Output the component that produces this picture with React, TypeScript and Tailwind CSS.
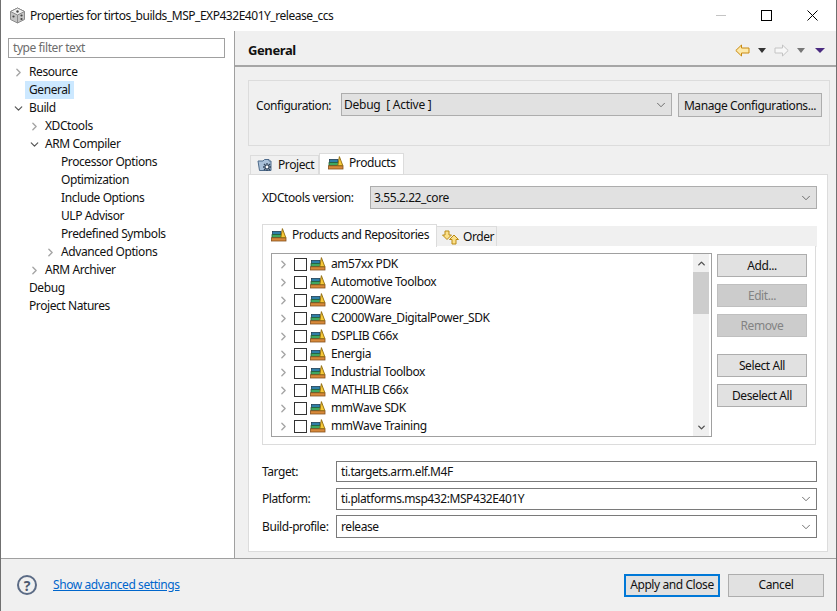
import { ChevronDown, ChevronRight, ChevronUp } from "lucide-react";

const font = "font-['Noto_Sans',sans-serif] text-[12px] tracking-[-0.42px] text-[#111]";

function Twisty({ open }: { open?: boolean }) {
  return open ? (
    <ChevronDown className="h-[13px] w-[13px] text-[#555]" strokeWidth={2.2} />
  ) : (
    <ChevronRight className="h-[13px] w-[13px] text-[#a6a6a6]" strokeWidth={2.6} />
  );
}

function TreeRow({
  label,
  indent = 0,
  twisty,
}: {
  label: string;
  indent?: number;
  twisty?: "open" | "closed";
}) {
  return (
    <div className="flex h-[18px] items-center" style={{ paddingLeft: indent * 16 + 11 }}>
      <span className="flex w-[13px] shrink-0 items-center justify-center">
        {twisty ? <Twisty open={twisty === "open"} /> : null}
      </span>
      <span className="pl-[4px] leading-[18px]">{label}</span>
    </div>
  );
}

function BooksIcon() {
  return (
    <svg width="16" height="14" viewBox="0 0 16 14" className="shrink-0">
      <rect x="1.5" y="3.5" width="8.5" height="3" fill="#2f7fa8" stroke="#1f3f55" strokeWidth="0.8" />
      <rect x="1" y="6.6" width="9.5" height="3" fill="#3fa860" stroke="#24603a" strokeWidth="0.8" />
      <rect x="0.5" y="9.8" width="14.5" height="3.2" fill="#d8893a" stroke="#84501c" strokeWidth="0.8" />
      <path d="M11.4 0.6 L9.8 9.6 H14.8 Z" fill="#f6c938" stroke="#8f6a10" strokeWidth="0.9" />
    </svg>
  );
}

function ProjectIcon() {
  return (
    <svg width="16" height="14" viewBox="0 0 16 14" className="shrink-0">
      <path d="M1 3 H6 L7.5 1.5 H12 V3 H14 V12.5 H2.5 Z" fill="#a9c0d8" stroke="#4d6a8a" strokeWidth="1" />
      <path d="M7 6 L13 12 M13 6 L7 12 M10 5 V13 M6 9 H14" stroke="#34465c" strokeWidth="1.3" />
      <circle cx="10" cy="9" r="1.4" fill="#fff" />
    </svg>
  );
}

function OrderIcon() {
  return (
    <svg width="17" height="15" viewBox="0 0 17 15" className="shrink-0">
      <path d="M3 1 H7 V5 H9.5 L5 9.5 L0.5 5 H3 Z" fill="#fbe08a" stroke="#b98a14" strokeWidth="1" />
      <path d="M10 14 H14 V9.5 H16.5 L12 5 L7.5 9.5 H10 Z" fill="#fbe08a" stroke="#b98a14" strokeWidth="1" />
    </svg>
  );
}

function WindowIcon() {
  return (
    <svg width="17" height="17" viewBox="0 0 17 17" className="shrink-0">
      <path d="M8.5 1 L15.5 4.5 V12.5 L8.5 16 L1.5 12.5 V4.5 Z" fill="#c4c4c4" stroke="#8c8c8c" />
      <path d="M8.5 1 L15.5 4.5 L8.5 8 L1.5 4.5 Z" fill="#efefef" stroke="#8c8c8c" />
      <path d="M8.5 8 V16" stroke="#8c8c8c" />
      <circle cx="8.5" cy="4.5" r="1.2" fill="#444" />
      <circle cx="4.5" cy="9.5" r="1.1" fill="#444" />
      <circle cx="12.5" cy="8.5" r="1.1" fill="#444" />
      <circle cx="12.5" cy="12" r="1.1" fill="#444" />
    </svg>
  );
}

function NavArrow({ left, disabled }: { left?: boolean; disabled?: boolean }) {
  return (
    <svg width="15" height="13" viewBox="0 0 15 13">
      <path
        d={left ? "M0.8 6.5 L6.5 1 V4 H14 V9 H6.5 V12 Z" : "M14.2 6.5 L8.5 1 V4 H1 V9 H8.5 V12 Z"}
        fill={disabled ? "#f7f7f7" : "#fde9a9"}
        stroke={disabled ? "#c4c4c4" : "#c98a10"}
      />
    </svg>
  );
}

function Caret({ color, wide }: { color: string; wide?: boolean }) {
  return (
    <svg width={wide ? 10 : 8} height="5" viewBox={wide ? "0 0 10 5" : "0 0 8 5"}>
      <path d={wide ? "M0 0 H10 L5 5 Z" : "M0 0 H8 L4 5 Z"} fill={color} />
    </svg>
  );
}

function Btn({
  label,
  disabled,
  className = "",
}: {
  label: string;
  disabled?: boolean;
  className?: string;
}) {
  return (
    <div
      className={
        (disabled
          ? "border-[#bfbfbf] bg-[#cccccc] text-[#838383] "
          : "border-[#adadad] bg-[#e1e1e1] ") +
        "flex items-center justify-center whitespace-nowrap border " +
        className
      }
    >
      {label}
    </div>
  );
}

function Combo({ value, className = "" }: { value: string; className?: string }) {
  return (
    <div className={"flex items-center justify-between border pr-[3px] " + className}>
      <span className="whitespace-pre">{value}</span>
      <ChevronDown className="h-[14px] w-[14px] text-[#555]" strokeWidth={1.4} />
    </div>
  );
}

const products = [
  "am57xx PDK",
  "Automotive Toolbox",
  "C2000Ware",
  "C2000Ware_DigitalPower_SDK",
  "DSPLIB C66x",
  "Energia",
  "Industrial Toolbox",
  "MATHLIB C66x",
  "mmWave SDK",
  "mmWave Training",
];

function ProductRow({ label }: { label: string }) {
  return (
    <div className="flex h-[18px] shrink-0 items-center pl-[5px]">
      <ChevronRight className="h-[13px] w-[13px] text-[#a6a6a6]" strokeWidth={2.6} />
      <span className="ml-[4px] h-[13px] w-[13px] shrink-0 border border-[#333] bg-white" />
      <span className="ml-[3px] flex">
        <BooksIcon />
      </span>
      <span className="ml-[5px] whitespace-nowrap">{label}</span>
    </div>
  );
}

export default function App() {
  return (
    <div className={font + " flex h-[611px] w-[837px] flex-col overflow-hidden border-x border-[#707070] bg-white"}>
      {/* title bar */}
      <div className="flex h-[31px] shrink-0 items-center bg-white pl-[8px]">
        <WindowIcon />
        <span className="ml-[4px] flex-1 tracking-[-0.47px]">Properties for tirtos_builds_MSP_EXP432E401Y_release_ccs</span>
        <div className="mr-[35px] h-px w-[10px] bg-[#c4c4c4]" />
        <div className="mr-[35px] h-[11px] w-[11px] border border-black" />
        <svg width="11" height="11" viewBox="0 0 11 11" className="mr-[18px]">
          <path d="M0.5 0.5 L10.5 10.5 M10.5 0.5 L0.5 10.5" stroke="#000" strokeWidth="1" />
        </svg>
      </div>

      <div className="flex min-h-0 flex-1">
        {/* left tree */}
        <div className="w-[233px] shrink-0 bg-white pl-[7px] pr-[9px] pt-[7px]">
          <div className="flex h-[20px] items-center border border-[#a0a0a0] pl-[4px] text-[#6d6d6d]">
            type filter text
          </div>
          <div className="-ml-[7px] mt-[5px]">
            <TreeRow label="Resource" twisty="closed" />
            <div className="flex h-[18px] items-center pl-[24px]">
              <span className="bg-[#cce8ff] px-[4px] leading-[18px]">General</span>
            </div>
            <TreeRow label="Build" twisty="open" />
            <TreeRow label="XDCtools" indent={1} twisty="closed" />
            <TreeRow label="ARM Compiler" indent={1} twisty="open" />
            <TreeRow label="Processor Options" indent={2} />
            <TreeRow label="Optimization" indent={2} />
            <TreeRow label="Include Options" indent={2} />
            <TreeRow label="ULP Advisor" indent={2} />
            <TreeRow label="Predefined Symbols" indent={2} />
            <TreeRow label="Advanced Options" indent={2} twisty="closed" />
            <TreeRow label="ARM Archiver" indent={1} twisty="closed" />
            <TreeRow label="Debug" />
            <TreeRow label="Project Natures" />
          </div>
        </div>

        {/* right pane */}
        <div className="flex min-w-0 flex-1 flex-col border-l border-[#a0a0a0] bg-[#f0f0f0]">
          <div className="flex h-[36px] shrink-0 items-center justify-between border-b-2 border-[#a6a6a6] pl-[13px] pr-[11px] pt-[4px]">
            <span className="mt-[1px] text-[13px] font-bold tracking-[-0.4px]">General</span>
            <div className="flex items-center">
              <NavArrow left />
              <span className="ml-[8px] flex"><Caret color="#333" /></span>
              <span className="ml-[8px] flex"><NavArrow disabled /></span>
              <span className="ml-[8px] flex"><Caret color="#777" /></span>
              <span className="ml-[10px] flex"><Caret color="#4a2a80" wide /></span>
            </div>
          </div>

          <div className="flex min-h-0 flex-1 flex-col pl-[13px] pr-[8px] pt-[13px]">
            {/* configuration group */}
            <div className="-mr-[2px] flex h-[66px] shrink-0 items-start border border-[#dcdcdc] pl-[7px] pr-[7px] pt-[12px]">
              <span className="mt-[4px] w-[85px] shrink-0">Configuration:</span>
              <Combo value="Debug  [ Active ]" className="h-[23px] w-[331px] shrink-0 border-[#adadad] bg-[#e1e1e1] pl-[2px] pt-[1px] tracking-[-0.25px]" />
              <Btn label="Manage Configurations..." className="ml-[6px] h-[24px] flex-1 pt-[1px]" />
            </div>

            {/* main tabs */}
            <div className="mt-[7px] flex h-[22px] shrink-0 items-end pl-[2px]">
              <div className="flex h-[20px] w-[69px] items-center gap-[5px] border border-b-0 border-[#dcdcdc] bg-[#f0f0f0] pb-[2px] pl-[6px]">
                <ProjectIcon />
                <span>Project</span>
              </div>
              <div className="flex h-[22px] w-[85px] items-center gap-[5px] border border-b-0 border-[#dcdcdc] bg-white pb-[4px] pl-[8px]">
                <BooksIcon />
                <span>Products</span>
              </div>
            </div>

            <div className="-mt-px flex min-h-0 flex-1 flex-col border border-[#dcdcdc] bg-white pl-[13px] pr-[10px] pt-[11px]">
              <div className="flex h-[23px] shrink-0 items-center">
                <span className="w-[108px] shrink-0">XDCtools version:</span>
                <Combo value="3.55.2.22_core" className="h-[23px] flex-1 border-[#adadad] bg-[#e1e1e1] pl-[3px]" />
              </div>

              {/* inner tabs */}
              <div className="mt-[15px] flex h-[23px] shrink-0 items-end">
                <div className="relative flex h-[23px] w-[175px] shrink-0 items-center gap-[5px] border border-b-0 border-[#dcdcdc] bg-white pb-[2px] pl-[8px]">
                  <BooksIcon />
                  <span className="whitespace-nowrap">Products and Repositories</span>
                </div>
                <div className="flex h-[21px] w-[60px] shrink-0 items-center gap-[4px] border border-b-0 border-l-0 border-[#dcdcdc] bg-[#f0f0f0] pl-[5px]">
                  <OrderIcon />
                  <span>Order</span>
                </div>
                <div className="h-[21px] flex-1 bg-[#f0f0f0]" />
              </div>

              <div className="-mt-px mr-[1px] flex h-[199px] shrink-0 items-start border border-t-0 border-[#dcdcdc] bg-white pl-[8px] pr-[7px] pt-[7px]">
                <div className="flex h-[184px] w-[441px] shrink-0 border border-[#a0a0a0] bg-white">
                  <div className="flex min-w-0 flex-1 flex-col overflow-hidden pt-[1px]">
                    {products.map((name) => (
                      <ProductRow key={name} label={name} />
                    ))}
                  </div>
                  <div className="mr-[2px] flex w-[16px] shrink-0 flex-col bg-[#f0f0f0]">
                    <div className="flex h-[18px] items-center justify-center">
                      <ChevronUp className="h-[11px] w-[11px] text-[#505050]" strokeWidth={3} />
                    </div>
                    <div className="h-[42px] bg-[#cdcdcd]" />
                    <div className="flex-1" />
                    <div className="flex h-[17px] items-center justify-center">
                      <ChevronDown className="h-[11px] w-[11px] text-[#505050]" strokeWidth={3} />
                    </div>
                  </div>
                </div>
                <div className="ml-[5px] mt-[1px] flex w-[90px] shrink-0 flex-col">
                  <Btn label="Add..." className="h-[23px]" />
                  <Btn label="Edit..." disabled className="mt-[7px] h-[23px]" />
                  <Btn label="Remove" disabled className="mt-[7px] h-[23px]" />
                  <Btn label="Select All" className="mt-[17px] h-[23px]" />
                  <Btn label="Deselect All" className="mt-[7px] h-[23px]" />
                </div>
              </div>

              {/* target fields */}
              <div className="mt-[16px] flex h-[21px] shrink-0 items-center">
                <span className="w-[74px] shrink-0">Target:</span>
                <div className="flex h-[21px] flex-1 items-center border border-[#7a7a7a] pl-[4px]">ti.targets.arm.elf.M4F</div>
              </div>
              <div className="mt-[6px] flex h-[22px] shrink-0 items-center">
                <span className="w-[74px] shrink-0">Platform:</span>
                <Combo value="ti.platforms.msp432:MSP432E401Y" className="h-[22px] flex-1 border-[#7a7a7a] bg-white pl-[4px]" />
              </div>
              <div className="mt-[5px] flex h-[23px] shrink-0 items-center">
                <span className="w-[74px] shrink-0">Build-profile:</span>
                <Combo value="release" className="h-[23px] flex-1 border-[#7a7a7a] bg-white pl-[4px]" />
              </div>
            </div>
            <div className="h-[6px] shrink-0" />
          </div>
        </div>
      </div>

      {/* footer */}
      <div className="flex h-[53px] shrink-0 items-center border-t border-[#a0a0a0] bg-[#f0f0f0] pl-[16px] pr-[12px]">
        <div className="flex h-[20px] w-[20px] items-center justify-center rounded-full border-2 border-[#5b6b85] text-[14px] font-bold text-[#4c5a70]">
          ?
        </div>
        <span className="ml-[16px] flex-1 text-[#0066cc] underline">Show advanced settings</span>
        <div className="flex h-[23px] w-[96px] items-center justify-center border-2 border-[#0078d7] bg-[#e1e1e1]">
          Apply and Close
        </div>
        <Btn label="Cancel" className="ml-[8px] h-[23px] w-[96px]" />
      </div>
    </div>
  );
}
